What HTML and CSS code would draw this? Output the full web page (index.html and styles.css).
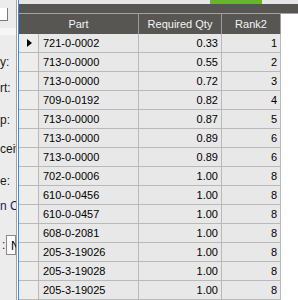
FILE: index.html
```html
<!DOCTYPE html>
<html>
<head>
    <title>Part Ranking</title>
    <link rel="stylesheet" href="styles.css">
</head>
<body>
    <div class="window">
        <!-- form behind the grid window, only its right edge shows -->
        <div class="side">
            <div class="side-box"></div>
            <div class="side-band"></div>
            <div class="label l-qty">y:</div>
            <div class="label l-part">rt:</div>
            <div class="label l-grp">p:</div>
            <div class="label l-recv">ceive</div>
            <div class="label l-date">e:</div>
            <div class="label l-cust">n Cu</div>
            <div class="side-field">
                <span class="label">:</span>
                <span class="side-input">N</span>
            </div>
        </div>

        <div class="frame">
            <div class="topbar"><div class="progress"></div></div>
            <div class="caption"></div>

            <div class="grid">
                <div class="row head">
                    <div class="hcell part">Part</div>
                    <div class="hcell">Required Qty</div>
                    <div class="hcell">Rank2</div>
                </div>
                <div class="row current">
                    <div class="rowhead"><span class="arrow"></span></div>
                    <div class="cell">721-0-0002</div>
                    <div class="cell num">0.33</div>
                    <div class="cell num">1</div>
                </div>
                <div class="row">
                    <div class="rowhead"></div>
                    <div class="cell">713-0-0000</div>
                    <div class="cell num">0.55</div>
                    <div class="cell num">2</div>
                </div>
                <div class="row">
                    <div class="rowhead"></div>
                    <div class="cell">713-0-0000</div>
                    <div class="cell num">0.72</div>
                    <div class="cell num">3</div>
                </div>
                <div class="row">
                    <div class="rowhead"></div>
                    <div class="cell">709-0-0192</div>
                    <div class="cell num">0.82</div>
                    <div class="cell num">4</div>
                </div>
                <div class="row">
                    <div class="rowhead"></div>
                    <div class="cell">713-0-0000</div>
                    <div class="cell num">0.87</div>
                    <div class="cell num">5</div>
                </div>
                <div class="row">
                    <div class="rowhead"></div>
                    <div class="cell">713-0-0000</div>
                    <div class="cell num">0.89</div>
                    <div class="cell num">6</div>
                </div>
                <div class="row">
                    <div class="rowhead"></div>
                    <div class="cell">713-0-0000</div>
                    <div class="cell num">0.89</div>
                    <div class="cell num">6</div>
                </div>
                <div class="row">
                    <div class="rowhead"></div>
                    <div class="cell">702-0-0006</div>
                    <div class="cell num">1.00</div>
                    <div class="cell num">8</div>
                </div>
                <div class="row">
                    <div class="rowhead"></div>
                    <div class="cell">610-0-0456</div>
                    <div class="cell num">1.00</div>
                    <div class="cell num">8</div>
                </div>
                <div class="row">
                    <div class="rowhead"></div>
                    <div class="cell">610-0-0457</div>
                    <div class="cell num">1.00</div>
                    <div class="cell num">8</div>
                </div>
                <div class="row">
                    <div class="rowhead"></div>
                    <div class="cell">608-0-2081</div>
                    <div class="cell num">1.00</div>
                    <div class="cell num">8</div>
                </div>
                <div class="row">
                    <div class="rowhead"></div>
                    <div class="cell">205-3-19026</div>
                    <div class="cell num">1.00</div>
                    <div class="cell num">8</div>
                </div>
                <div class="row">
                    <div class="rowhead"></div>
                    <div class="cell">205-3-19028</div>
                    <div class="cell num">1.00</div>
                    <div class="cell num">8</div>
                </div>
                <div class="row">
                    <div class="rowhead"></div>
                    <div class="cell">205-3-19025</div>
                    <div class="cell num">1.00</div>
                    <div class="cell num">8</div>
                </div>
            </div>
        </div>
    </div>
</body>
</html>
```

FILE: styles.css
```css
body {
    margin: 0;
    font-family: "Liberation Sans", Arial, sans-serif;
    font-size: 11px;
    color: #000;
    background-color: #fff;
}

.window {
    display: flex;
    width: 298px;
    height: 300px;
    overflow: hidden;
}

/* Left form, mostly hidden behind the grid window */
.side {
    width: 16px;
    flex-shrink: 0;
    background-color: #ececec;
    border-right: 1px solid #a3a3a3;
    overflow: hidden;
    white-space: nowrap;
    font-size: 12px;
}

.side-box {
    width: 7px;
    height: 12px;
    margin-top: 8px;
    background-color: #fff;
    border-right: 1px solid #7a7a7a;
    border-bottom: 1px solid #7a7a7a;
}

.side-band {
    height: 7px;
    margin-top: 7px;
    background-color: #f6f6f6;
}

.label {
    height: 14px;
    line-height: 14px;
    color: #1a1a1a;
}

.l-qty { margin-top: 20px; }
.l-part { margin-top: 12px; }
.l-grp { margin-top: 18px; }
.l-recv { margin-top: 15px; }
.l-date { margin-top: 18px; }
.l-cust { margin-top: 11px; color: #1a1a5a; }

.side-field {
    display: flex;
    align-items: center;
    margin-top: 22px;
}

.side-field .label {
    width: 10px;
    padding-left: 2px;
    box-sizing: border-box;
}

.side-input {
    height: 20px;
    line-height: 20px;
    padding-left: 4px;
    width: 10px;
    background-color: #fbfbfb;
    border: 1px solid #8a8a8a;
    box-sizing: border-box;
}

/* Grid window */
.frame {
    flex: 1;
    margin-left: 1px;
    border-left: 1px solid #3b8ad6;
    display: flex;
    flex-direction: column;
}

.topbar {
    height: 6px;
    display: flex;
    padding-left: 191px;
    background-color: #e6e6e6;
}

.progress {
    width: 52px;
    height: 4px;
    background-color: #6ab42c;
}

.caption {
    height: 21px;
    box-sizing: border-box;
    background-color: #575652;
    border-bottom: 1px solid #a3a3a3;
}

.grid {
    width: 262px;
}

.row {
    display: grid;
    grid-template-columns: 20px 100px 83px 59px;
    height: 19px;
}

.row > div {
    box-sizing: border-box;
    border-right: 1px solid #b9b9b9;
    border-bottom: 1px solid #b9b9b9;
    line-height: 18px;
    overflow: hidden;
    white-space: nowrap;
}

.row.head {
    height: 20px;
}

.row.head > .hcell {
    background-color: #575652;
    color: #f4f4f4;
    text-align: center;
    line-height: 20px;
    border-bottom: none;
    border-right-color: #9c9c9c;
}

.hcell.part {
    grid-column: span 2;
}

.rowhead {
    background-color: #ededed;
    display: flex;
    align-items: center;
    justify-content: center;
}

.arrow {
    width: 0;
    height: 0;
    margin-left: 2px;
    border-left: 5px solid #000;
    border-top: 4px solid transparent;
    border-bottom: 4px solid transparent;
}

.cell {
    background-color: #e8e8e8;
    padding-left: 4px;
}

.cell.num {
    text-align: right;
    padding-left: 0;
    padding-right: 3px;
}
```
